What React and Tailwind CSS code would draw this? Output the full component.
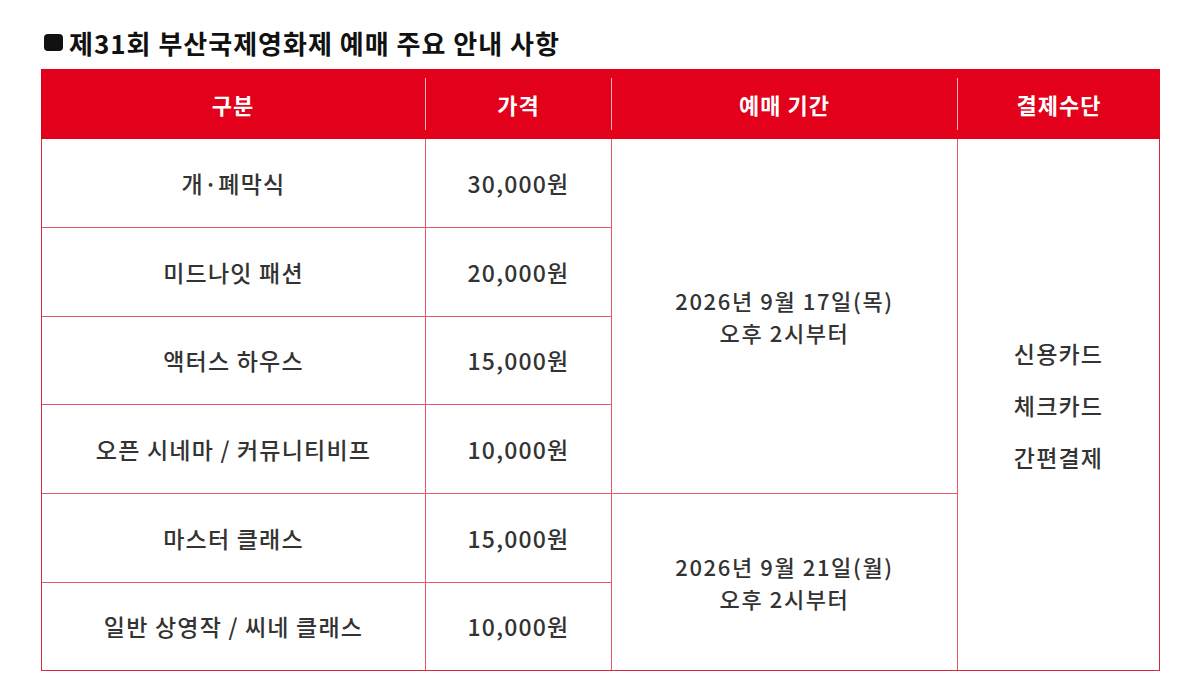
const rows = [
  { name: '개·폐막식', price: '30,000원' },
  { name: '미드나잇 패션', price: '20,000원' },
  { name: '액터스 하우스', price: '15,000원' },
  { name: '오픈 시네마 / 커뮤니티비프', price: '10,000원' },
  { name: '마스터 클래스', price: '15,000원' },
  { name: '일반 상영작 / 씨네 클래스', price: '10,000원' },
]

const rowStarts = ['row-start-1', 'row-start-2', 'row-start-3', 'row-start-4', 'row-start-5', 'row-start-6']

export default function App() {
  return (
    <div
      className="min-h-screen bg-white pt-[26px] pl-[41px]"
      style={{ fontFamily: '"Noto Sans CJK KR", "Noto Sans", sans-serif' }}
    >
      {/* 제목 */}
      <div className="flex items-center h-[32px] mb-[11px] pl-[3px]">
        <span className="w-[19px] h-[17px] rounded-[4px] bg-[#111] mr-[6px]" />
        <h1 className="text-[26px] font-bold text-[#111] tracking-[1px]">
          제31회 부산국제영화제 예매 주요 안내 사항
        </h1>
      </div>

      <div className="w-[1119px]">
        {/* 헤더 */}
        <div className="grid grid-cols-[384px_186px_346px_203px] items-center h-[70px] bg-[#e2001a] text-white text-[22px] font-bold tracking-[1px]">
          <div className="h-[52px] flex items-center justify-center">구분</div>
          <div className="h-[52px] flex items-center justify-center border-l border-[#f5b5bd]">가격</div>
          <div className="h-[52px] flex items-center justify-center border-l border-[#f5b5bd]">예매 기간</div>
          <div className="h-[52px] flex items-center justify-center border-l border-[#f5b5bd]">결제수단</div>
        </div>

        {/* 본문 */}
        <div className="grid grid-cols-[383px_185px_345px_201px] grid-rows-[88px_88px_87px_88px_88px_87px] gap-px bg-[#e7596a] border-x border-b border-[#d7283c] text-[23px] font-medium text-[#333] tracking-[1.2px]">
          {rows.map((r, i) => (
            <div key={'n' + i} className={'col-start-1 bg-white flex items-center justify-center ' + rowStarts[i]}>
              {r.name}
            </div>
          ))}
          {rows.map((r, i) => (
            <div key={'p' + i} className={'col-start-2 bg-white flex items-center justify-center ' + rowStarts[i]}>
              {r.price}
            </div>
          ))}
          <div className="col-start-3 row-start-1 row-span-4 bg-white flex flex-col items-center justify-center text-[22px] tracking-[1.6px] leading-[32px]">
            <span>2026년 9월 17일(목)</span>
            <span>오후 2시부터</span>
          </div>
          <div className="col-start-3 row-start-5 row-span-2 bg-white flex flex-col items-center justify-center text-[22px] tracking-[1.6px] leading-[32px]">
            <span>2026년 9월 21일(월)</span>
            <span>오후 2시부터</span>
          </div>
          <div className="col-start-4 row-start-1 row-span-6 bg-white flex flex-col items-center justify-center gap-[18px] leading-[34px]">
            <span>신용카드</span>
            <span>체크카드</span>
            <span>간편결제</span>
          </div>
        </div>
      </div>
    </div>
  )
}
